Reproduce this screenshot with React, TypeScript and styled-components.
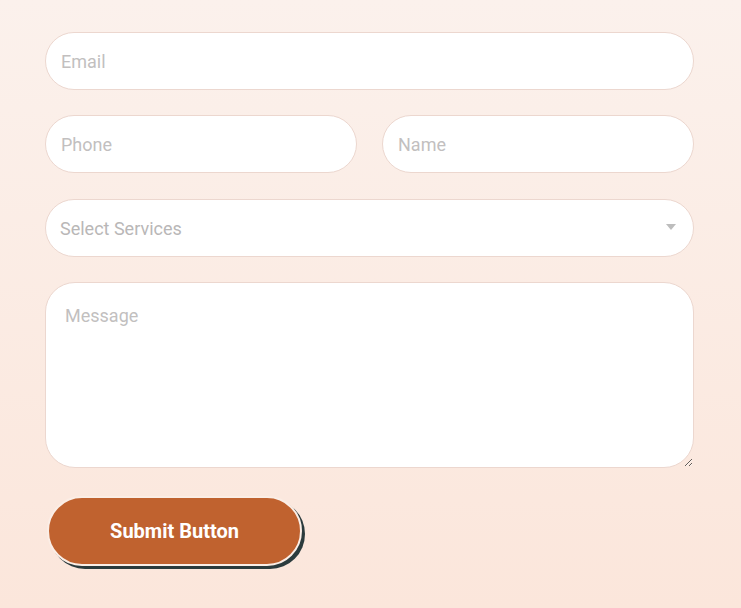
import React from 'react'
import styled, { createGlobalStyle } from 'styled-components'

const GlobalStyle = createGlobalStyle`
  html, body {
    margin: 0;
    padding: 0;
  }
  body {
    min-height: 608px;
    background: linear-gradient(180deg, #fbf1ec 0%, #fbe6db 100%);
    font-family: Roboto, "Liberation Sans", sans-serif;
  }
`

const Form = styled.form`
  display: flex;
  flex-direction: column;
  gap: 25px;
  width: 649px;
  padding: 32px 0 0 45px;
`

const Row = styled.div`
  display: grid;
  grid-template-columns: 1fr 1fr;
  gap: 25px;
`

const fieldBase = `
  box-sizing: border-box;
  width: 100%;
  border: 1px solid #ecd7cf;
  background: #ffffff;
  font-family: Roboto, "Liberation Sans", sans-serif;
  font-size: 18px;
  color: #444;
  outline: none;
  &::placeholder {
    color: #c2bfbf;
  }
`

const Input = styled.input`
  ${fieldBase}
  height: 58px;
  border-radius: 29px;
  padding: 0 15px;
`

const SelectWrap = styled.div`
  position: relative;
  margin-top: 1px;
  &::after {
    content: '';
    position: absolute;
    right: 18px;
    top: 25px;
    border-left: 5px solid transparent;
    border-right: 5px solid transparent;
    border-top: 6px solid #bdbdbd;
    pointer-events: none;
  }
`

const Select = styled.select`
  ${fieldBase}
  height: 58px;
  border-radius: 29px;
  padding: 0 14px;
  appearance: none;
  color: #b9b7b7;
`

const TextArea = styled.textarea`
  ${fieldBase}
  height: 186px;
  border-radius: 30px;
  padding: 22px 19px;
  display: block;
`

const SubmitButton = styled.button`
  align-self: flex-start;
  margin: 3px 0 0 2px;
  width: 255px;
  height: 70px;
  border-radius: 35px;
  border: 2px solid #fbeee6;
  background: #c0622f;
  box-shadow: 3px 3px 0 #2b3b3d;
  color: #ffffff;
  font-family: Roboto, "Liberation Sans", sans-serif;
  font-weight: 700;
  font-size: 20px;
  cursor: pointer;
`

export default function App() {
  return (
    <>
      <GlobalStyle />
      <Form onSubmit={e => e.preventDefault()}>
        <Input type="email" placeholder="Email" />
        <Row>
          <Input type="tel" placeholder="Phone" />
          <Input type="text" placeholder="Name" />
        </Row>
        <SelectWrap>
          <Select defaultValue="">
            <option value="" disabled>
              Select Services
            </option>
            <option value="design">Design</option>
            <option value="development">Development</option>
          </Select>
        </SelectWrap>
        <TextArea placeholder="Message" />
        <SubmitButton type="submit">Submit Button</SubmitButton>
      </Form>
    </>
  )
}
